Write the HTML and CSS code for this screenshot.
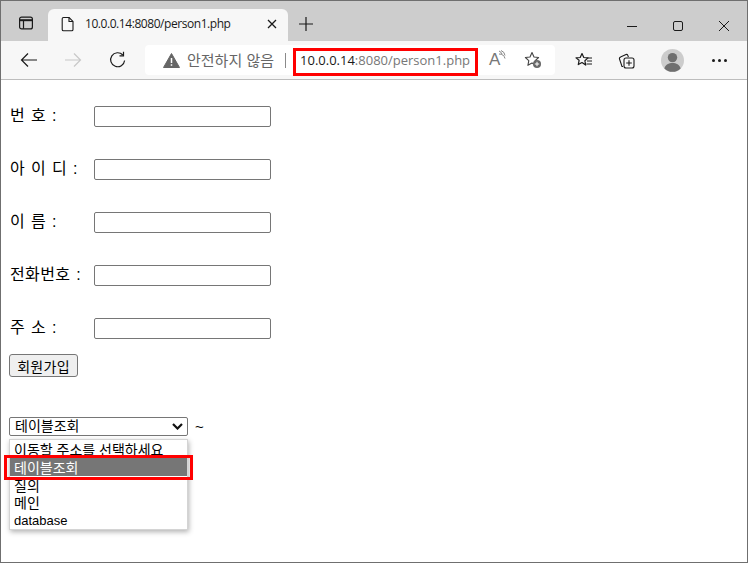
FILE: index.html
```html
<!DOCTYPE html>
<html lang="ko">
<head>
<meta charset="utf-8">
<title>10.0.0.14:8080/person1.php</title>
<link rel="stylesheet" href="styles.css">
</head>
<body>
<div class="window">
  <div class="tabstrip">
    <span class="tabs-btn">
      <svg width="16" height="16" viewBox="0 0 16 16" fill="none" stroke="#1a1a1a" stroke-width="1.2"><rect x="1.6" y="2.1" width="12.8" height="11.8" rx="2"/><path d="M1.6 5.2h12.8" stroke-width="2"/><path d="M5.5 5.5v8.2"/></svg>
    </span>
    <div class="tab">
      <svg class="tab-icon" width="14" height="16" viewBox="0 0 14 16" fill="none" stroke="#1a1a1a" stroke-width="1.1"><path d="M2.5 1.5h5.600l3.900 3.900v8a1.300 1.300 0 0 1-1.300 1.300H2.500a1.300 1.300 0 0 1-1.300-1.300V2.800a1.300 1.300 0 0 1 1.300-1.300z"/><path d="M8 1.500v4h4"/></svg>
      <span class="tab-title">10.0.0.14:8080/person1.php</span>
      <svg class="tab-close" width="10" height="10" viewBox="0 0 10 10" stroke="#1a1a1a" stroke-width="1.3"><path d="M1 1l8 8M9 1l-8 8"/></svg>
    </div>
    <svg class="newtab" width="16" height="16" viewBox="0 0 16 16" stroke="#1a1a1a" stroke-width="1.2"><path d="M8 1v14M1 8h14"/></svg>
    <div class="winctl">
      <svg width="12" height="12" viewBox="0 0 12 12" stroke="#1a1a1a" stroke-width="1"><path d="M1 6.500h10"/></svg>
      <svg width="12" height="12" viewBox="0 0 12 12" fill="none" stroke="#1a1a1a" stroke-width="1"><rect x="1.500" y="1.500" width="9" height="9" rx="1.500"/></svg>
      <svg width="12" height="12" viewBox="0 0 12 12" stroke="#1a1a1a" stroke-width="1"><path d="M1 1l10 10M11 1L1 11"/></svg>
    </div>
  </div>
  <div class="toolbar">
    <svg class="nav" width="18" height="16" viewBox="0 0 18 16" fill="none" stroke="#1a1a1a" stroke-width="1.2"><path d="M17 8H1.500M8 1.500L1.500 8 8 14.500"/></svg>
    <svg class="nav" width="18" height="16" viewBox="0 0 18 16" fill="none" stroke="#c8c8c8" stroke-width="1.2"><path d="M1 8h15.500M10 1.500L16.500 8 10 14.500"/></svg>
    <svg class="nav" width="18" height="18" viewBox="0 0 18 18" fill="none" stroke="#1a1a1a" stroke-width="1.2"><path d="M15.600 9.500A7 7 0 1 1 13.800 4"/><path d="M14.500 0.800v4h-4"/></svg>
    <div class="addressbar">
      <svg class="warn" width="17" height="15" viewBox="0 0 17 15"><path d="M8.500 .5l8 14H.5z" fill="#666" stroke="#666" stroke-linejoin="round"/><path d="M8.500 5v5M8.500 11.200v1.600" stroke="#fff" stroke-width="1.500"/></svg>
      <span class="insecure">안전하지 않음</span>
      <span class="sep"></span>
      <span class="url"><span class="host">10.0.0.14</span>:8080/person1.php</span>
      <span class="url-mark"></span>
      <span class="read">A<svg class="waves" width="8" height="9" viewBox="0 0 8 9" fill="none" stroke="#777" stroke-width=".9"><path d="M1 1a5 5 0 0 1 3 3M1 4a6 6 0 0 1 6 4.500M3 .5a6 6 0 0 1 4 5"/></svg></span>
      <svg class="addfav" width="18" height="18" viewBox="0 0 18 18"><path d="M8 1.600l2 4.400 4.600.5-3.400 3.200.9 4.600L8 12l-4.100 2.300.9-4.600L1.400 6.500 6 6z" fill="none" stroke="#444" stroke-width="1.100" stroke-linejoin="round"/><circle cx="13" cy="13" r="4" fill="#666"/><path d="M13 10.800v4.400M10.800 13h4.400" stroke="#fff" stroke-width="1"/></svg>
    </div>
    <svg class="tool fav" width="18" height="16" viewBox="0 0 18 16" fill="none" stroke="#1a1a1a" stroke-width="1.2"><path d="M7 1.500l1.800 4 4.200.4-3.100 2.900.8 4.300L7 10.500 3.300 12.600l.8-4.300L1 5.900l4.200-.4z" stroke-linejoin="round"/><path d="M12.500 6H17M12 9h5M11.500 12H17" stroke-width="1"/></svg>
    <svg class="tool coll" width="17" height="17" viewBox="0 0 17 17" fill="none" stroke="#1a1a1a" stroke-width="1.1"><path d="M5 14.500l-1 0-2.500-7.500a1.500 1.500 0 0 1 1-1.900L8 2.500a1.500 1.500 0 0 1 1.800.9l.6 1.600"/><rect x="6" y="6" width="10" height="10" rx="2"/><path d="M11 8.200v5.600M8.200 11h5.600"/></svg>
    <svg class="avatar" width="23" height="23" viewBox="0 0 23 23"><circle cx="11.500" cy="11.500" r="11.500" fill="#ccc"/><circle cx="11.500" cy="8.600" r="4.700" fill="#6f6f6f"/><path d="M3.400 19.500c1-4 4.400-5.500 8.100-5.500s7.100 1.500 8.100 5.500a11.500 11.500 0 0 1-16.200 0z" fill="#6f6f6f"/></svg>
    <span class="more"><i></i><i></i><i></i></span>
  </div>
  <main class="page">
    <form class="signup">
      <div class="row"><label class="lbl">번 호 :</label><input class="field" type="text"></div>
      <div class="row"><label class="lbl">아 이 디 :</label><input class="field" type="text"></div>
      <div class="row"><label class="lbl">이 름 :</label><input class="field" type="text"></div>
      <div class="row"><label class="lbl">전화번호 :</label><input class="field" type="text"></div>
      <div class="row"><label class="lbl">주 소 :</label><input class="field" type="text"></div>
      <button class="submit" type="button">회원가입</button>
    </form>
    <div class="selrow">
      <span class="select">테이블조회<svg width="11" height="7" viewBox="0 0 11 7" fill="none" stroke="#111" stroke-width="2.200"><path d="M1 1l4.500 4.500L10 1"/></svg></span>
      <span class="tilde">~</span>
    </div>
    <ul class="dropdown">
      <li>이동할 주소를 선택하세요</li>
      <li class="active">테이블조회</li>
      <li>질의</li>
      <li>메인</li>
      <li>database</li>
    </ul>
    <div class="mark"></div>
  </main>
</div>
</body>
</html>
```
FILE: styles.css
```css
* { box-sizing: border-box; }
html, body { margin: 0; padding: 0; }
body { font-family: "Liberation Sans", "Noto Sans CJK KR", sans-serif; background: #fff; color: #000; }
.window { width: 748px; height: 563px; border: 1px solid #6f6f6f; display: flex; flex-direction: column; overflow: hidden; position: relative; }
.tabstrip { height: 40px; background: #cdcdcd; display: flex; align-items: flex-end; flex: none; }
.tabs-btn { width: 47px; height: 31px; padding: 5px 0 0 17px; display: block; }
.tab { width: 240px; height: 32px; background: #f7f7f7; border-radius: 6px 6px 0 0; display: flex; align-items: center; padding: 0 11px 3px 13px; }
.tab-icon { flex: none; }
.tab-title { font: 12px/16px "Open Sans", sans-serif; letter-spacing: -.44px; color: #1a1a1a; margin-left: 10px; flex: 1; white-space: nowrap; }
.tab-close { flex: none; }
.newtab { margin: 0 0 9px 10px; }
.winctl { margin-left: auto; display: flex; gap: 34px; padding: 0 17px 9px 0; align-items: center; }
.toolbar { height: 39px; background: #f7f7f7; border-bottom: 1px solid #bdbdbd; display: flex; align-items: center; flex: none; position: relative; }
.nav { margin-left: 19px; flex: none; }
.nav + .nav { margin-left: 26px; }
.nav + .nav + .nav { margin-left: 27px; }
.addressbar { margin-left: 18px; width: 410px; height: 30px; background: #fff; border-radius: 4px; display: flex; align-items: center; padding-left: 18px; position: relative; flex: none; }
.warn { flex: none; }
.insecure { font-family: "Noto Sans CJK KR", sans-serif; font-size: 15px; color: #666; margin-left: 7px; white-space: nowrap; line-height: 18px; }
.sep { width: 1px; height: 15px; background: #8a8a8a; margin-left: 11px; }
.url { font: 13px/18px "Open Sans", sans-serif; color: #777; margin-left: 14px; white-space: nowrap; }
.host { color: #1a1a1a; }
.url-mark { position: absolute; left: 148px; top: 3px; width: 185px; height: 28px; border: 3px solid #f00; }
.read { position: absolute; left: 344px; top: 5px; font: 17px/20px "Liberation Sans", sans-serif; color: #777; display: flex; }
.waves { margin-left: -2px; }
.addfav { position: absolute; left: 379px; top: 6px; }
.tool { flex: none; }
.fav { margin-left: 20px; }
.coll { margin-left: 25px; }
.avatar { margin-left: 26px; flex: none; }
.more { margin-left: 28px; display: flex; gap: 3px; }
.more i { width: 3px; height: 3px; border-radius: 50%; background: #1a1a1a; display: block; }
.page { flex: 1; position: relative; padding: 26px 0 0 8px; }
.row { height: 53px; display: flex; align-items: flex-start; }
.lbl { width: 85px; font-size: 16px; line-height: 18px; white-space: nowrap; padding: 1px 0 0 1px; word-spacing: 1px; letter-spacing: .4px; }
.field { width: 177px; height: 21px; border: 1px solid #767676; border-radius: 2px; background: #fff; padding: 0; display: block; }
.submit { display: block; margin-top: -17px; width: 69px; height: 23px; font: 14px/1 "Noto Sans CJK KR", sans-serif; letter-spacing: .3px; padding: 0; background: #efefef; border: 1px solid #767676; border-radius: 3px; color: #000; }
.selrow { margin-top: 40px; display: flex; align-items: center; height: 19px; }
.select { width: 179px; height: 19px; border: 1px solid #767676; border-radius: 2px; background: #fff; font-size: 14px; line-height: 17px; padding: 0 4px 0 5px; display: flex; align-items: center; justify-content: space-between; }
.tilde { font: 15px/19px "Liberation Sans", sans-serif; margin-left: 7px; }
.dropdown { position: absolute; left: 8px; top: 359px; width: 179px; margin: 0; padding: 0; list-style: none; background: #fff; border: 1px solid #d4d4d4; box-shadow: 1px 2px 5px rgba(0,0,0,.3); font-size: 14px; }
.dropdown li { height: 17.800px; padding: 1px 0 0 4px; white-space: nowrap; line-height: 18px; overflow: hidden; }
.dropdown li:last-child { font-size: 13px; }
.dropdown .active { background: #767676; color: #fff; }
.mark { position: absolute; left: 3px; top: 375px; width: 189px; height: 25px; border: 3px solid #f00; }
```
